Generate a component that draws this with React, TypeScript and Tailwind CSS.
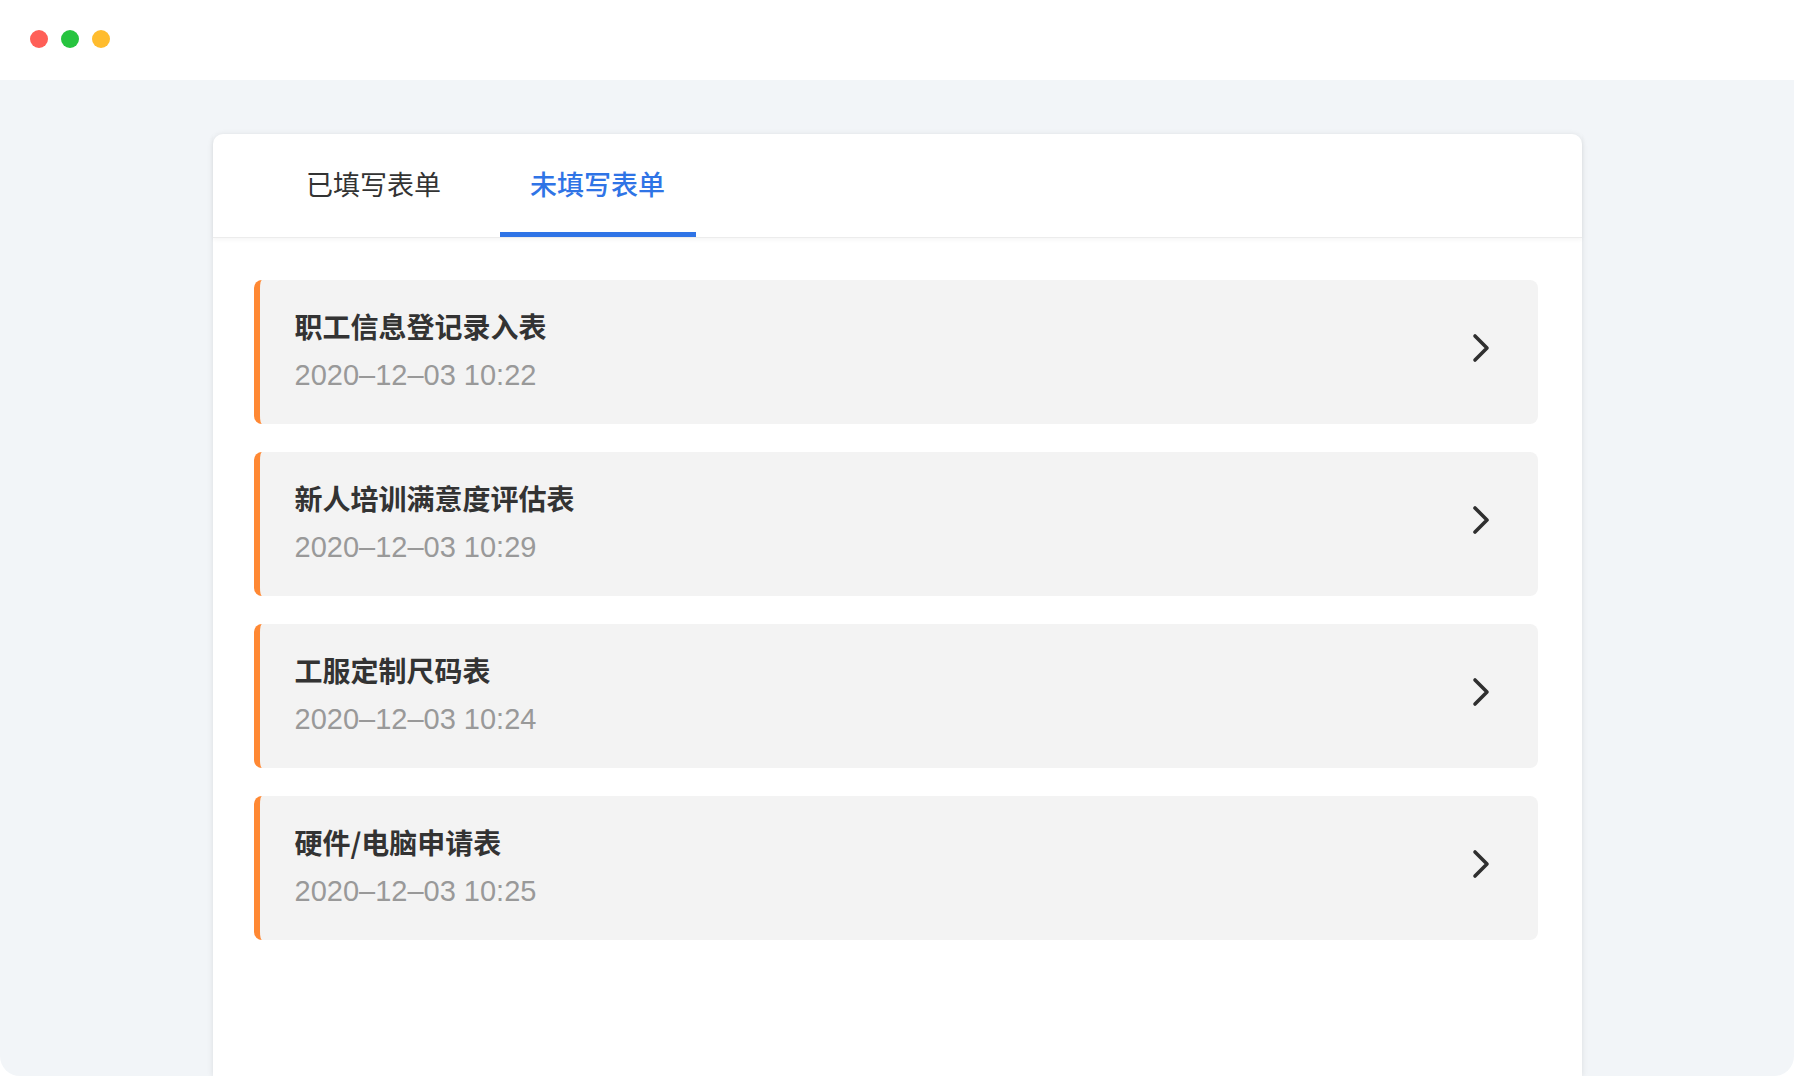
import React from "react";

const items = [
  { title: "职工信息登记录入表", time: "2020–12–03 10:22" },
  { title: "新人培训满意度评估表", time: "2020–12–03 10:29" },
  { title: "工服定制尺码表", time: "2020–12–03 10:24" },
  { title: "硬件/电脑申请表", time: "2020–12–03 10:25" },
];

function Chevron() {
  return (
    <svg width="18" height="30" viewBox="0 0 18 30" className="block">
      <polyline
        points="3,3 15,15 3,27"
        fill="none"
        stroke="#2f2f2f"
        strokeWidth="3.6"
        strokeLinecap="round"
        strokeLinejoin="round"
      />
    </svg>
  );
}

export default function App() {
  return (
    <div className="w-full h-[1076px] bg-white overflow-hidden">
      <div className="w-full h-full rounded-b-[20px] overflow-hidden bg-[#f2f5f8] flex flex-col">
        <div className="h-[80px] bg-white flex items-start shrink-0 pl-[30px] pt-[30px] gap-[13px]">
          <div className="w-[18px] h-[18px] rounded-full bg-[#ff5f57]" />
          <div className="w-[18px] h-[18px] rounded-full bg-[#26c43f]" />
          <div className="w-[18px] h-[18px] rounded-full bg-[#ffbc2e]" />
        </div>
        <div className="flex-1 pt-[54px] flex justify-center">
          <div
            className="w-[1369px] h-full bg-white rounded-t-[10px] shadow-[0_1px_6px_rgba(0,0,0,0.10)] flex flex-col"
            style={{ fontFamily: '"Noto Sans CJK SC", "Noto Sans", sans-serif' }}
          >
            <div className="h-[104px] shrink-0 flex items-end pl-[63px] gap-[28px] border-b border-[#ececec] shadow-[0_2px_4px_rgba(0,0,0,0.04)]">
              <div className="w-[196px] h-full flex flex-col items-center">
                <div className="flex-1 flex items-center text-[27px] text-[#333333] pt-[2px]">
                  已填写表单
                </div>
                <div className="h-[5px] w-full" />
              </div>
              <div className="w-[196px] h-full flex flex-col items-center">
                <div className="flex-1 flex items-center text-[27px] text-[#2f74e6] font-medium pt-[2px]">
                  未填写表单
                </div>
                <div className="h-[5px] w-full bg-[#2f74e6]" />
              </div>
            </div>
            <div className="flex flex-col gap-[28px] pt-[42px] pl-[41px] pr-[44px]">
              {items.map((it) => (
                <div
                  key={it.title}
                  className="h-[144px] rounded-[8px] bg-[#f3f3f3] border-l-[6px] border-[#ff8833] flex items-start justify-between pl-[35px] pr-[48px]"
                >
                  <div className="pt-[26px] flex flex-col">
                    <div className="text-[28px] leading-[40px] font-semibold text-[#333333]">
                      {it.title}
                    </div>
                    <div
                      className="text-[29px] leading-[40px] mt-[9px] text-[#999999]"
                      style={{ fontFamily: '"Liberation Sans", Arial, sans-serif' }}
                    >
                      {it.time}
                    </div>
                  </div>
                  <div className="self-center mb-[8px]">
                    <Chevron />
                  </div>
                </div>
              ))}
            </div>
          </div>
        </div>
      </div>
    </div>
  );
}
